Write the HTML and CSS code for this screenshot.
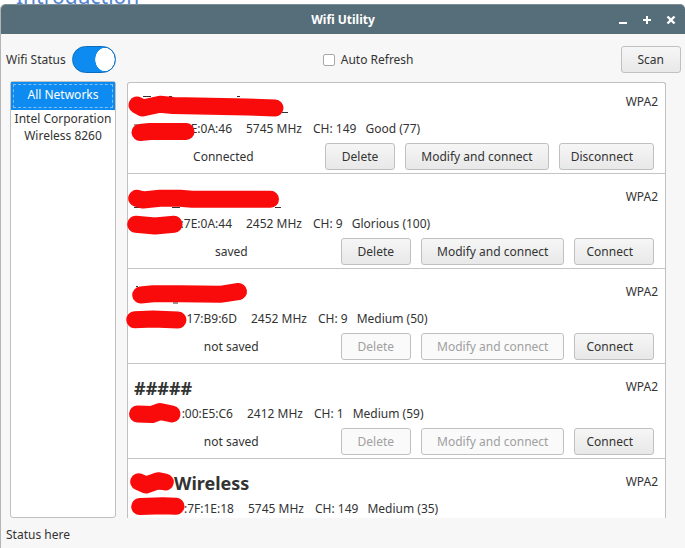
FILE: index.html
```html
<!DOCTYPE html>
<html lang="en">
<head>
<meta charset="utf-8">
<title>Wifi Utility</title>
<link rel="stylesheet" href="styles.css">
</head>
<body>
<div class="backdrop"><span class="backdrop-heading">Introduction</span></div>
<div class="window">
  <header class="titlebar">
    <h1 class="title">Wifi Utility</h1>
    <div class="window-controls">
      <button class="window-button" aria-label="Minimize"><svg width="12" height="12"><path d="M2 9h8" stroke="#fff" stroke-width="2"/></svg></button>
      <button class="window-button" aria-label="Maximize"><svg width="12" height="12"><path d="M2 6h8M6 2v8" stroke="#fff" stroke-width="2"/></svg></button>
      <button class="window-button" aria-label="Close"><svg width="12" height="12"><path d="M2.5 2.5l7 7M9.500 2.5l-7 7" stroke="#fff" stroke-width="2.400"/></svg></button>
    </div>
  </header>
  <div class="toolbar">
    <label class="option">Wifi Status <input class="switch" type="checkbox" role="switch" checked></label>
    <label class="option"><input class="check" type="checkbox">Auto Refresh</label>
    <button class="button">Scan</button>
  </div>
  <main class="content">
    <nav class="sidebar">
      <button class="device device-selected">All Networks</button>
      <button class="device">Intel Corporation Wireless 8260</button>
    </nav>
    <section class="list">
      <ul class="networks">
        <li class="network">
          <div class="head"><h2 class="name"></h2><span>WPA2</span></div>
          <div class="meta"><span class="mac" style="width:98px">E:0A:46</span><span class="freq">5745 MHz</span><span class="channel">CH: 149</span><span>Good (77)</span></div>
          <div class="actions"><span class="state">Connected</span><button class="button">Delete</button><button class="button button-modify">Modify and connect</button><button class="button button-connect">Disconnect</button></div>
          <svg class="redaction" width="200" height="90" aria-hidden="true">
            <path class="trace" d="M15 17.500h8M41 17.500h3M109 17.500h3M154 33.500h6M6 46h4"/>
            <path class="marker" d="M9 26L14.500 29L32 25.300L45 26.500L119 28L147 29M12 53.500L22 52.500H58"/>
          </svg>
        </li>
        <li class="network">
          <div class="head"><h2 class="name"></h2><span>WPA2</span></div>
          <div class="meta"><span class="mac" style="width:98px">:7E:0A:44</span><span class="freq">2452 MHz</span><span class="channel">CH: 9</span><span>Glorious (100)</span></div>
          <div class="actions"><span class="state">saved</span><button class="button">Delete</button><button class="button button-modify">Modify and connect</button><button class="button button-connect">Connect</button></div>
          <svg class="redaction" width="200" height="90" aria-hidden="true">
            <path class="trace" d="M6 33.500h6M44 33.500h8M147 33.500h6M22 17.500h3M71 17.500h3M118 17.500h3M130 17.500h3"/>
            <path class="marker" d="M8.700 24.300L15 26L32 24.300H52L64 25.300H142.500M7.700 50.300L27 52L46 50.300"/>
          </svg>
        </li>
        <li class="network">
          <div class="head"><h2 class="name"></h2><span>WPA2</span></div>
          <div class="meta"><span class="mac" style="width:103px">17:B9:6D</span><span class="freq">2452 MHz</span><span class="channel">CH: 9</span><span>Medium (50)</span></div>
          <div class="actions"><span class="state">not saved</span><button class="button" disabled>Delete</button><button class="button button-modify" disabled>Modify and connect</button><button class="button button-connect">Connect</button></div>
          <svg class="redaction" width="200" height="90" aria-hidden="true">
            <path class="trace" d="M8 17.500h2M45 34h5M110 30h3"/>
            <path class="marker" d="M12.700 26L25 24.700H52L92 25.300L110.500 22.500M6.700 50.700L25 50L50 51"/>
          </svg>
        </li>
        <li class="network">
          <div class="head"><h2 class="name">#####</h2><span>WPA2</span></div>
          <div class="meta"><span class="mac" style="width:99px">:00:E5:C6</span><span class="freq">2412 MHz</span><span class="channel">CH: 1</span><span>Medium (59)</span></div>
          <div class="actions"><span class="state">not saved</span><button class="button" disabled>Delete</button><button class="button button-modify" disabled>Modify and connect</button><button class="button button-connect">Connect</button></div>
          <svg class="redaction" width="200" height="90" aria-hidden="true">
            <path class="marker" d="M9.500 50L24 50.500L32 47.500L44 50"/>
          </svg>
        </li>
        <li class="network">
          <div class="head"><h2 class="name name-partial">Wireless</h2><span>WPA2</span></div>
          <div class="meta"><span class="mac" style="width:100px">:7F:1E:18</span><span class="freq">5745 MHz</span><span class="channel">CH: 149</span><span>Medium (35)</span></div>
          <svg class="redaction" width="200" height="90" aria-hidden="true">
            <path class="trace" d="M29 30h5"/>
            <path class="marker" d="M10.700 22.700L18 26L30 21.700L37.300 23M11.700 47.500L35 46.700L48 47.300"/>
          </svg>
        </li>
      </ul>
    </section>
  </main>
  <footer class="status">Status here</footer>
</div>
</body>
</html>
```

FILE: styles.css
```css
* { box-sizing: border-box; }

body {
  margin: 0;
  height: 100vh;
  display: flex;
  flex-direction: column;
  overflow: hidden;
  background: #fff;
  color: #333;
  font: 12px/17px "Noto Sans", sans-serif;
}

button, input { font: inherit; color: inherit; margin: 0; }

.backdrop {
  flex: none;
  height: 4px;
  padding-left: 16px;
  display: flex;
  align-items: flex-end;
  overflow: hidden;
}

.backdrop-heading {
  color: #5484d0;
  font-size: 21px;
  line-height: 16px;
}

.window {
  flex: 1;
  min-height: 0;
  display: flex;
  flex-direction: column;
  border-left: 1px solid #b4b4b4;
  border-radius: 5px 5px 0 0;
  background: #f7f7f7;
}

.titlebar {
  flex: none;
  height: 30px;
  display: grid;
  grid-template-columns: 1fr auto 1fr;
  align-items: center;
  padding: 0 8px;
  border-top: 1px solid #7b8d95;
  border-radius: 5px 5px 0 0;
  background: #566e79;
  color: #fff;
}

.title { grid-column: 2; margin: 0; font-size: 12px; line-height: 17px; }

.window-controls { display: flex; justify-content: flex-end; gap: 12px; }

.window-button {
  display: flex;
  padding: 0;
  border: 0;
  background: none;
}

.toolbar {
  flex: none;
  display: flex;
  justify-content: space-between;
  align-items: center;
  padding: 12px 4px 8px 5px;
}

.option { display: flex; align-items: center; gap: 6px; }

.switch {
  appearance: none;
  width: 44px;
  height: 27px;
  border: 1px solid #0a6cbd;
  border-radius: 14px;
  background: radial-gradient(ellipse 10px 12px at 32px 50%, #fff 94%, #0d8bf0 100%);
}

.check {
  appearance: none;
  width: 12px;
  height: 12px;
  border: 1px solid #a8a8a8;
  border-radius: 2px;
  background: #fff;
}

.button {
  height: 27px;
  padding: 0 16px;
  border: 1px solid #c0c0c0;
  border-radius: 3px;
  background: linear-gradient(#f6f6f6, #e8e8e8);
  white-space: nowrap;
}

.button:disabled { background: #fafafa; color: #a0a0a0; }

.button-modify { padding: 0 15px; }
.button-connect { padding: 0 20px 0 11px; }

.content {
  flex: 1;
  min-height: 0;
  display: flex;
  gap: 11px;
  padding: 0 19px 0 9px;
}

.sidebar {
  flex: none;
  width: 106px;
  display: flex;
  flex-direction: column;
  border: 1px solid #c0c0c0;
  border-radius: 3px;
  background: #fff;
}

.device {
  padding: 0;
  border: 0;
  background: none;
}

.device-selected {
  height: 28px;
  padding-bottom: 4px;
  background: #0d8bf0;
  color: #fff;
  outline: 1px dashed #7fc0f7;
  outline-offset: -3px;
}

.list {
  flex: 1;
  min-width: 0;
  margin-top: 1px;
  border: 1px solid #c0c0c0;
  border-bottom: 0;
  border-radius: 3px 3px 0 0;
  background: #fff;
}

/* The list is scrolled slightly; marker strokes may cross the side border. */
.networks {
  display: flow-root;
  height: 100%;
  margin: 0;
  padding: 0;
  list-style: none;
  clip-path: inset(0 -4px);
}

.network {
  position: relative;
  height: 95px;
  padding: 12px 7px 3px 6px;
  border-bottom: 1px solid #c4c4c4;
}

.network:first-child { margin-top: -4px; }
.network:last-child { height: 58px; padding-bottom: 0; border: 0; }

.head {
  display: flex;
  justify-content: space-between;
  height: 24px;
  line-height: 22px;
}

.name { margin: 0; font-size: 18px; line-height: 24px; }
.name-partial { padding-left: 40px; }

.meta { display: flex; margin: 5px 0; line-height: 18px; }
.mac { text-align: right; }
.freq { margin-left: 14px; }
.channel { margin: 0 9px 0 11px; }

.actions { display: flex; gap: 10px; align-items: center; padding-right: 4px; }
.state { flex: 1; padding-right: 2px; text-align: center; }

.redaction { position: absolute; top: 0; left: 0; overflow: visible; pointer-events: none; }
.marker { fill: none; stroke: #f90b0b; stroke-width: 17; stroke-linecap: round; stroke-linejoin: round; }
.trace { fill: none; stroke: #333; stroke-width: 1; }

.status { flex: none; padding: 8px 5px 5px; }
```
